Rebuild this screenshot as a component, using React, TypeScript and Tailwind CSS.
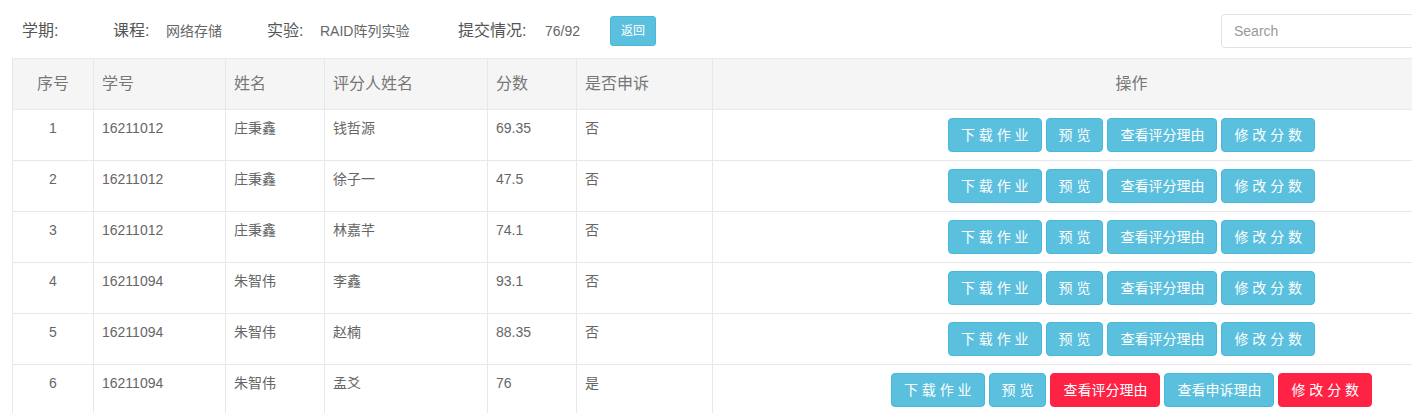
import React from 'react'

// one row of the grading table
type Row = {
  no: number
  sid: string
  name: string
  grader: string
  score: string
  appeal: boolean
}

const rows: Row[] = [
  { no: 1, sid: '16211012', name: '庄秉鑫', grader: '钱哲源', score: '69.35', appeal: false },
  { no: 2, sid: '16211012', name: '庄秉鑫', grader: '徐子一', score: '47.5', appeal: false },
  { no: 3, sid: '16211012', name: '庄秉鑫', grader: '林嘉芊', score: '74.1', appeal: false },
  { no: 4, sid: '16211094', name: '朱智伟', grader: '李鑫', score: '93.1', appeal: false },
  { no: 5, sid: '16211094', name: '朱智伟', grader: '赵楠', score: '88.35', appeal: false },
  { no: 6, sid: '16211094', name: '朱智伟', grader: '孟爻', score: '76', appeal: true },
]

const font = { fontFamily: '"Liberation Sans", "Noto Sans CJK SC", sans-serif' }

function Btn({ children, red }: { children: React.ReactNode; red?: boolean }) {
  return (
    <button
      className={`inline-block h-[34px] px-[12px] rounded-[4px] border text-[14px] leading-[20px] text-white whitespace-pre ${
        red ? 'bg-[#fe2345] border-[#fe2345]' : 'bg-[#5bc0de] border-[#46b8da]'
      }`}
    >
      {children}
    </button>
  )
}

export default function App() {
  return (
    <div className="w-full overflow-hidden bg-white" style={font}>
      <div className="w-[1563px]">
        {/* top info bar */}
        <div className="flex items-center pt-[14px] pl-[22px] pr-[12px] mb-[10px]">
          <span className="w-[91px] text-[16px] text-[#555]">学期:</span>
          <span className="w-[53px] text-[16px] text-[#555]">课程:</span>
          <span className="w-[101px] text-[14px] text-[#666]">网络存储</span>
          <span className="w-[53px] text-[16px] text-[#555]">实验:</span>
          <span className="w-[138px] text-[14px] text-[#666]">RAID阵列实验</span>
          <span className="w-[87px] text-[16px] text-[#555]">提交情况:</span>
          <span className="w-[65px] text-[14px] text-[#666]">76/92</span>
          <button className="h-[30px] px-[10px] rounded-[3px] border border-[#46b8da] bg-[#5bc0de] text-white text-[12px] leading-[18px]">
            返回
          </button>
          <input
            className="ml-auto w-[330px] h-[34px] px-[12px] rounded-[4px] border border-[#e3e3e3] text-[14px] text-[#555] placeholder:text-[#999] outline-none"
            placeholder="Search"
          />
        </div>

        {/* grading table */}
        <table className="ml-[12px] w-[1539px] table-fixed border-collapse border border-[#e8e8e8] text-[14px] text-[#666]">
          <colgroup>
            <col className="w-[81px]" />
            <col className="w-[132px]" />
            <col className="w-[99px]" />
            <col className="w-[163px]" />
            <col className="w-[89px]" />
            <col className="w-[136px]" />
            <col />
          </colgroup>
          <thead>
            <tr className="bg-[#f5f5f5] h-[51px] text-[16px] text-[#777]">
              <th className="border border-[#e8e8e8] font-normal text-center">序号</th>
              <th className="border border-[#e8e8e8] font-normal text-left px-[8px]">学号</th>
              <th className="border border-[#e8e8e8] font-normal text-left px-[8px]">姓名</th>
              <th className="border border-[#e8e8e8] font-normal text-left px-[8px]">评分人姓名</th>
              <th className="border border-[#e8e8e8] font-normal text-left px-[8px]">分数</th>
              <th className="border border-[#e8e8e8] font-normal text-left px-[8px]">是否申诉</th>
              <th className="border border-[#e8e8e8] font-normal text-center">操作</th>
            </tr>
          </thead>
          <tbody>
            {rows.map(r => (
              <tr key={r.no} className="h-[51px] align-top">
                <td className="border border-[#e8e8e8] p-[8px] leading-[20px] text-center">{r.no}</td>
                <td className="border border-[#e8e8e8] p-[8px] leading-[20px]">{r.sid}</td>
                <td className="border border-[#e8e8e8] p-[8px] leading-[20px]">{r.name}</td>
                <td className="border border-[#e8e8e8] p-[8px] leading-[20px]">{r.grader}</td>
                <td className="border border-[#e8e8e8] p-[8px] leading-[20px]">{r.score}</td>
                <td className="border border-[#e8e8e8] p-[8px] leading-[20px]">{r.appeal ? '是' : '否'}</td>
                <td className="border border-[#e8e8e8] p-[8px] leading-[20px]">
                  <div className="flex justify-center gap-[4px]">
                    <Btn>下 载 作 业</Btn>
                    <Btn>预 览</Btn>
                    <Btn red={r.appeal}>查看评分理由</Btn>
                    {r.appeal && <Btn>查看申诉理由</Btn>}
                    <Btn red={r.appeal}>修 改 分 数</Btn>
                  </div>
                </td>
              </tr>
            ))}
          </tbody>
        </table>
      </div>
    </div>
  )
}
